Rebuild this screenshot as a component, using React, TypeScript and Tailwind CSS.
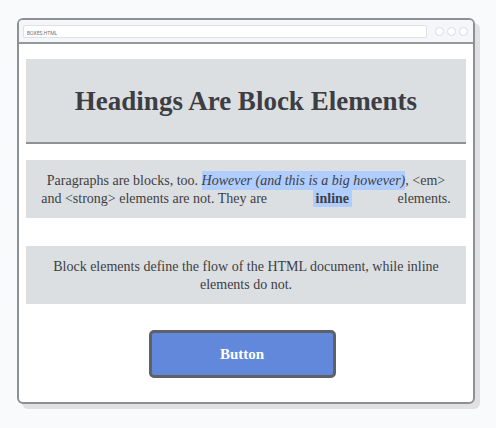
const windowButtons = ["minimize", "maximize", "close"];

function TitleBar() {
  return (
    <header className="flex h-6 items-center border-b-2 border-[#96999c] bg-[#f5f6f9] pr-[5px] pl-1">
      <input
        type="text"
        aria-label="Address"
        defaultValue="BOXES.HTML"
        className="h-[13px] min-w-0 flex-1 rounded-xs border border-[#dfe1e4] bg-white px-[3px] pt-1 font-['Roboto',sans-serif] text-[5px] leading-none text-[#6f7275] outline-none"
      />
      <div className="ml-2 flex gap-[3px]">
        {windowButtons.map((name) => (
          <button
            key={name}
            type="button"
            aria-label={name}
            className="size-[9px] rounded-full border border-[#d9dbde] bg-white"
          />
        ))}
      </div>
    </header>
  );
}

export default function App() {
  return (
    <div className="min-h-screen bg-[#f9fafc] pt-[18px] pr-[21px] pb-5 pl-[17px] font-['Liberation_Serif',serif] text-[#3d3e43]">
      <main className="overflow-hidden rounded-md border-2 border-[#8e9194] bg-white shadow-[5px_5px_0_#e1e1e3]">
        <TitleBar />
        <div className="px-[7px] pt-[15px] pb-6 text-center">
          <h1 className="border-b-2 border-[#8f9195] bg-[#dbdfe2] pt-[25px] pb-[23px] text-[27px] leading-[35px] font-bold">
            Headings Are Block Elements
          </h1>
          <p className="mt-4 bg-[#dbdfe2] px-3 pt-3 pb-2.5 text-[14px] leading-[18px]">
            Paragraphs are blocks, too.{" "}
            <em className="bg-[#b0cdff] py-[2px]">However (and this is a big however)</em>, &lt;em&gt;
            and &lt;strong&gt; elements are not. They are{" "}
            <strong className="mx-[42px] bg-[#b0cdff] px-[3px] py-px">inline</strong> elements.
          </p>
          <p className="mt-7 bg-[#dbdfe2] px-3 pt-3 pb-2.5 text-[14px] leading-[18px]">
            Block elements define the flow of the HTML document, while inline elements do not.
          </p>
          <button
            type="button"
            className="mt-[26px] mr-2 h-12 w-[187px] rounded-[5px] border-3 border-[#5e6267] bg-[#6288db] text-[15px] font-bold text-white"
          >
            Button
          </button>
        </div>
      </main>
    </div>
  );
}
